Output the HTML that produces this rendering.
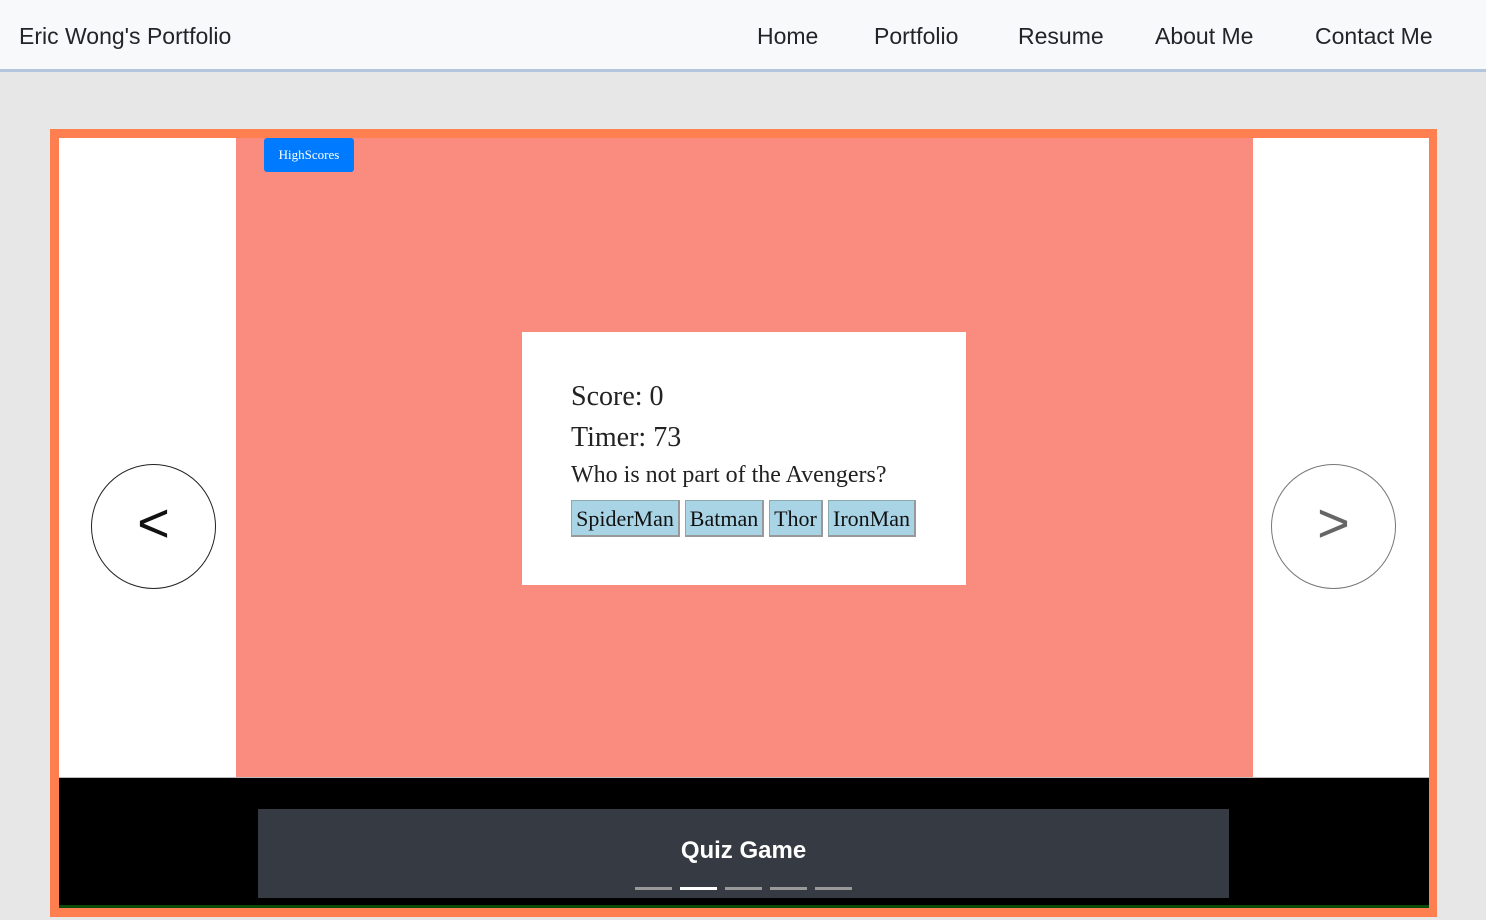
<!DOCTYPE html>
<html><head><style>
body{margin:0;width:1486px;height:920px;background:#e7e7e7;font-family:"Liberation Sans",sans-serif;position:relative;overflow:hidden}
.nav{position:absolute;left:0;top:0;width:1486px;height:69px;background:#f8f9fa;border-bottom:3px solid #b3c6de}
.nav span{position:absolute;top:23px;font-size:23px;color:#212529;white-space:nowrap}
.a{position:absolute}
.btn{position:absolute;top:500px;height:37px;background:#a9d4e6;border:1px solid #8aa;border-right:2px solid #999;border-bottom:2px solid #999;font:22px "Liberation Serif",serif;color:#111;line-height:35px;text-align:center;box-sizing:border-box;white-space:nowrap}
.ind{position:absolute;top:887px;width:37px;height:3px;background:#999}
</style></head><body>
<div class="nav">
<span style="left:19px">Eric Wong's Portfolio</span>
<span style="left:757px">Home</span>
<span style="left:874px">Portfolio</span>
<span style="left:1018px">Resume</span>
<span style="left:1155px">About Me</span>
<span style="left:1315px">Contact Me</span>
</div>
<div class="a" style="left:50px;top:129px;width:1387px;height:788px;background:#ff7f50"></div>
<div class="a" style="left:59px;top:138px;width:1370px;height:640px;background:#fff"></div>
<div class="a" style="left:236px;top:138px;width:1017px;height:640px;background:#fa8b7f"></div>
<div class="a" style="left:59px;top:777px;width:1370px;height:1px;background:#bbb"></div>
<div class="a" style="left:59px;top:778px;width:1370px;height:127px;background:#000"></div>
<div class="a" style="left:59px;top:905px;width:1370px;height:3px;background:#0a4a0a"></div>
<div class="a" style="left:264px;top:138px;width:90px;height:34px;background:#007bff;border-radius:3px;color:#fff;font:13px 'Liberation Serif',serif;line-height:34px;text-align:center">HighScores</div>
<div class="a" style="left:522px;top:332px;width:444px;height:253px;background:#fff"></div>
<div class="a" style="left:571px;top:381px;font:28px 'Liberation Serif',serif;color:#222">Score: 0</div>
<div class="a" style="left:571px;top:422px;font:28px 'Liberation Serif',serif;color:#222">Timer: 73</div>
<div class="a" style="left:571px;top:462px;font:24px 'Liberation Serif',serif;color:#222">Who is not part of the Avengers?</div>
<div class="btn" style="left:571px;width:109px">SpiderMan</div>
<div class="btn" style="left:685px;width:79px">Batman</div>
<div class="btn" style="left:769px;width:54px">Thor</div>
<div class="btn" style="left:828px;width:88px">IronMan</div>
<div class="a" style="left:91px;top:464px;width:123px;height:123px;border:1px solid #222;border-radius:50%;font-size:56px;line-height:116px;text-align:center;color:#111">&lt;</div>
<div class="a" style="left:1271px;top:464px;width:123px;height:123px;border:1px solid #777;border-radius:50%;font-size:56px;line-height:116px;text-align:center;color:#666">&gt;</div>
<div class="a" style="left:258px;top:809px;width:971px;height:89px;background:#363a42"></div>
<div class="a" style="left:258px;top:837px;width:971px;text-align:center;color:#fff;font:bold 24px 'Liberation Sans',sans-serif">Quiz Game</div>
<div class="ind" style="left:635px"></div>
<div class="ind" style="left:680px;background:#fff"></div>
<div class="ind" style="left:725px"></div>
<div class="ind" style="left:770px"></div>
<div class="ind" style="left:815px"></div>
</body></html>
